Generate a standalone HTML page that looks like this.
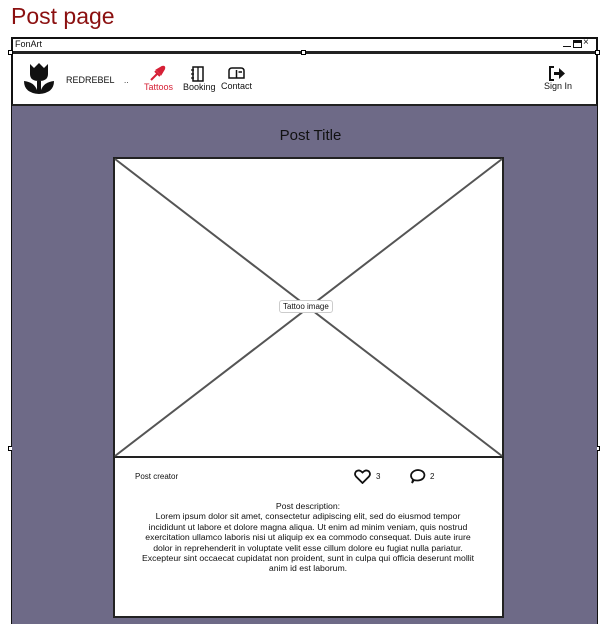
<!DOCTYPE html>
<html style="overflow:hidden"><head><style>
*{margin:0;padding:0;box-sizing:border-box}
html,body{width:607px;height:624px;overflow:hidden}
body{background:#fff;position:relative;font-family:"Liberation Sans",sans-serif;color:#111}
.a{position:absolute}
</style></head><body>
<div class="a" style="left:11px;top:3px;font-size:23px;color:#8b1010;">Post page</div>
<div class="a" style="left:11px;top:37px;width:587px;height:600px;border:2px solid #111;background:#fff"></div>
<div class="a" style="left:15px;top:39px;font-size:9px">FonArt</div>
<div class="a" style="left:563px;top:46px;width:8px;height:1px;background:#111"></div>
<div class="a" style="left:573px;top:40px;width:9px;height:8px;border:1px solid #111;border-top:3px solid #111"></div>
<div class="a" style="left:583px;top:37px;font-size:10px">×</div>
<div class="a" style="left:12px;top:51px;width:585px;height:3px;background:#222"></div>
<div class="a" style="left:8px;top:50px;width:5px;height:5px;border:1px solid #000;background:#fff"></div>
<div class="a" style="left:301px;top:50px;width:5px;height:5px;border:1px solid #000;background:#fff"></div>
<div class="a" style="left:595px;top:50px;width:5px;height:5px;border:1px solid #000;background:#fff"></div>
<div class="a" style="left:8px;top:446px;width:5px;height:5px;border:1px solid #000;background:#fff"></div>
<div class="a" style="left:595px;top:446px;width:5px;height:5px;border:1px solid #000;background:#fff"></div>
<svg class="a" style="left:22px;top:62px" width="34" height="34" viewBox="0 0 34 34"><path d="M8 2 L12 6 L17 1 L22 6 L26 2 L26 12 Q26 19 17 19 Q8 19 8 12Z M15 18 H19 V28 Q22 20 32 19 Q32 31 17 32 Q2 31 2 19 Q12 20 15 28Z" fill="#111"/></svg>
<div class="a" style="left:66px;top:75px;font-size:9px">REDREBEL</div>
<div class="a" style="left:124px;top:76px;font-size:8px">..</div>
<svg class="a" style="left:149px;top:65px" width="17" height="17" viewBox="0 0 17 17"><path d="M2 15 L9 8" stroke="#d62036" stroke-width="2" fill="none"/><path d="M6 6 L11 11 M8 5 L13 2 Q16 1 15 4 L12 9Z" stroke="#d62036" stroke-width="2" fill="#d62036"/></svg>
<div class="a" style="left:144px;top:82px;font-size:9px;color:#d62036">Tattoos</div>
<svg class="a" style="left:191px;top:66px" width="14" height="16" viewBox="0 0 14 16"><rect x="2" y="1" width="10" height="14" fill="none" stroke="#111" stroke-width="1.5"/><path d="M7 1V15M0 4H3M0 8H3M0 12H3" stroke="#111" stroke-width="1.3"/></svg>
<div class="a" style="left:183px;top:82px;font-size:9px">Booking</div>
<svg class="a" style="left:228px;top:67px" width="17" height="12" viewBox="0 0 17 12"><path d="M1 11V4Q1 1 4 1H13Q16 1 16 4V11ZM8.5 3V11M10.5 5H14" fill="none" stroke="#111" stroke-width="1.5"/></svg>
<div class="a" style="left:221px;top:81px;font-size:9px">Contact</div>
<svg class="a" style="left:548px;top:66px" width="18" height="15" viewBox="0 0 18 15"><path d="M6 1H2V14H6" fill="none" stroke="#111" stroke-width="2"/><path d="M6 6H11V2L17 7.5L11 13V9H6Z" fill="#111"/></svg>
<div class="a" style="left:544px;top:81px;font-size:9px">Sign In</div>
<div class="a" style="left:12px;top:104px;width:585px;height:2px;background:#222"></div>
<div class="a" style="left:12px;top:106px;width:585px;height:518px;background:#6e6a87"></div>
<div class="a" style="left:0;width:621px;top:127px;text-align:center;font-size:15px">Post Title</div>
<div class="a" style="left:113px;top:157px;width:391px;height:461px;background:#fff;border:2px solid #222"></div>
<svg class="a" style="left:113px;top:157px" width="391" height="301"><rect x="1" y="1" width="389" height="299" fill="#fff" stroke="#222" stroke-width="2"/><path d="M2 2L389 299M389 2L2 299" stroke="#555" stroke-width="2"/></svg>
<div class="a" style="left:279px;top:300px;font-size:8px;background:#fff;border:1px solid #ccc;border-radius:3px;padding:1px 3px">Tattoo image</div>
<div class="a" style="left:135px;top:472px;font-size:8px">Post creator</div>
<svg class="a" style="left:354px;top:469px" width="17" height="15" viewBox="0 0 17 15"><path d="M8.5 14L2 7.5Q0 5 2 2.5Q5 0 8.5 3.5Q12 0 15 2.5Q17 5 15 7.5Z" fill="none" stroke="#111" stroke-width="1.8"/></svg>
<div class="a" style="left:376px;top:472px;font-size:8px">3</div>
<svg class="a" style="left:409px;top:469px" width="17" height="15" viewBox="0 0 17 15"><path d="M3 14L4 10.5Q1 8 2.5 4.5Q5 1 9 1Q15 1.5 15.5 6Q15 11 9 11.5Q6 11.5 5 11Z" fill="none" stroke="#111" stroke-width="1.7"/></svg>
<div class="a" style="left:430px;top:472px;font-size:8px">2</div>
<div class="a" style="left:140px;top:501px;width:336px;text-align:center;font-size:8.7px;line-height:10.4px">Post description:<br>Lorem ipsum dolor sit amet, consectetur adipiscing elit, sed do eiusmod tempor incididunt ut labore et dolore magna aliqua. Ut enim ad minim veniam, quis nostrud exercitation ullamco laboris nisi ut aliquip ex ea commodo consequat. Duis aute irure dolor in reprehenderit in voluptate velit esse cillum dolore eu fugiat nulla pariatur. Excepteur sint occaecat cupidatat non proident, sunt in culpa qui officia deserunt mollit anim id est laborum.</div>
</body></html>
